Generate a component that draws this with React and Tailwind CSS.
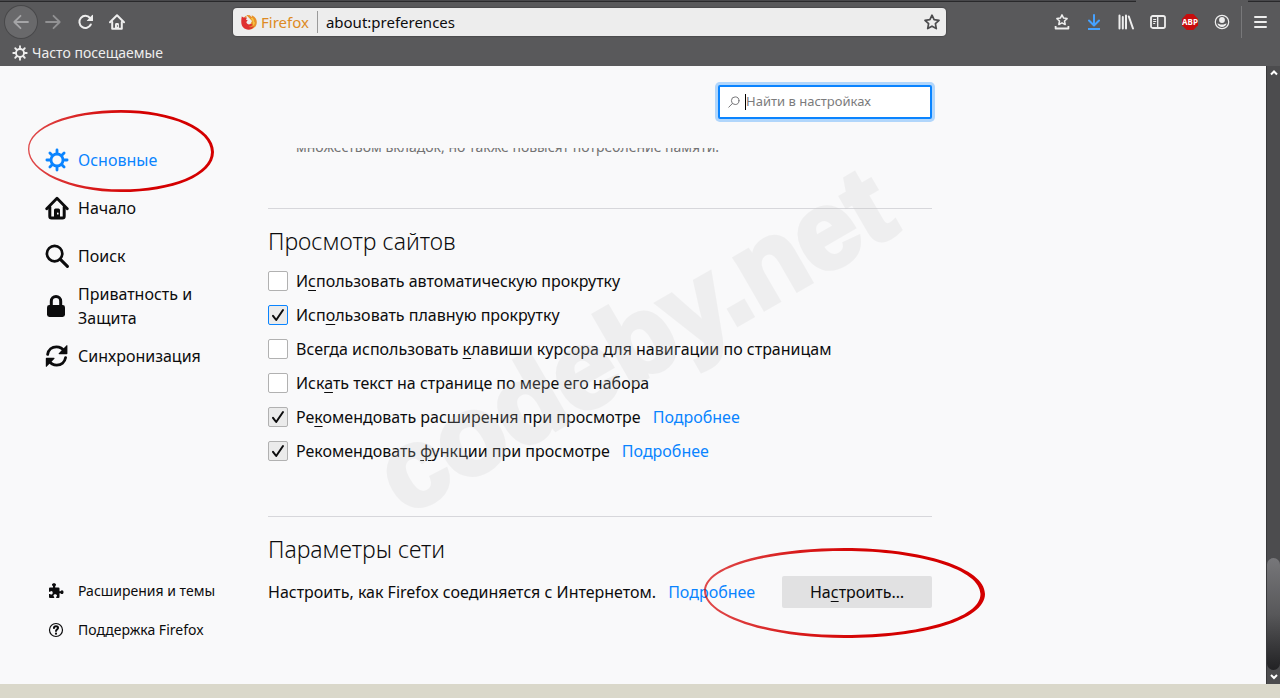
import React, { useState } from "react";

const NAV_ITEMS = [
  { id: "general", label: "Основные", icon: GearIcon },
  { id: "home", label: "Начало", icon: HomeIcon },
  { id: "search", label: "Поиск", icon: SearchIcon },
  { id: "privacy", label: "Приватность и Защита", icon: LockIcon },
  { id: "sync", label: "Синхронизация", icon: SyncIcon },
];

const BROWSING_OPTIONS = [
  { id: "autoscroll", before: "И", key: "с", after: "пользовать автоматическую прокрутку" },
  { id: "smooth", before: "Исп", key: "о", after: "льзовать плавную прокрутку", checked: true, hot: true },
  { id: "caret", before: "Всегда использовать ", key: "к", after: "лавиши курсора для навигации по страницам" },
  { id: "typeahead", before: "Иск", key: "а", after: "ть текст на странице по мере его набора" },
  { id: "extensions", before: "Ре", key: "к", after: "омендовать расширения при просмотре", checked: true, more: true },
  { id: "features", before: "Рекомендовать ", key: "ф", after: "ункции при просмотре", checked: true, more: true },
];

function GearIcon({ className }) {
  return (
    <svg viewBox="0 0 24 24" className={className} fill="none" stroke="currentColor" strokeLinecap="round">
      <circle cx="12" cy="12" r="6" strokeWidth="2.8" />
      <path
        strokeWidth="2.8"
        d="M12 1.9v3M12 19.1v3M1.9 12h3M19.1 12h3M4.9 4.9l2 2M17.1 17.1l2 2M4.9 19.1l2-2M17.1 6.9l2-2"
      />
    </svg>
  );
}

function HomeIcon({ className }) {
  return (
    <svg viewBox="0 0 24 24" className={className} fill="none" stroke="currentColor" strokeLinecap="round" strokeLinejoin="round">
      <path strokeWidth="2.8" d="M1.7 12.8 12 2.200l10.3 10.600" />
      <path strokeWidth="3" d="M4.8 11v9.2q0 1.8 1.8 1.8h10.8q1.8 0 1.8-1.8V11" />
      <path fill="currentColor" stroke="none" d="M9 22v-8a1.5 1.5 0 0 1 1.5-1.5h3A1.5 1.5 0 0 1 15 14v8z" />
      <rect x="12" y="16.5" width="1.6" height="2" rx=".6" fill="#f9f9fa" stroke="none" />
    </svg>
  );
}

function SearchIcon({ className }) {
  return (
    <svg viewBox="0 0 24 24" className={className} fill="none" stroke="currentColor" strokeLinecap="round">
      <circle cx="9.6" cy="9.6" r="7.7" strokeWidth="2.700" />
      <path strokeWidth="3" d="m15.4 15.4 7 7" />
    </svg>
  );
}

function LockIcon({ className }) {
  return (
    <svg viewBox="0 0 24 24" className={className} fill="none">
      <path stroke="currentColor" strokeWidth="3" d="M6.3 12V7.2a4.7 4.7 0 0 1 9.4 0V12" />
      <rect x="2" y="11" width="18" height="12" rx="2.4" fill="currentColor" />
    </svg>
  );
}

function SyncIcon({ className }) {
  return (
    <svg viewBox="0 0 24 24" className={className} fill="none" stroke="currentColor" strokeWidth="2.8" strokeLinecap="round">
      <path d="M2.6 10.4C3.4 5.8 7 2.8 11.4 2.8c3.400 0 6.200 1.600 7.800 4.400" />
      <path d="M20.600 13.600C19.800 18.200 16.200 21.200 11.800 21.200c-3.400 0-6.200-1.600-7.800-4.400" />
      <path fill="currentColor" stroke="none" d="M21.400 1.400q1-.8 1 .6v7.400q0 .8-.8.8h-7.200q-1.400 0-.6-1zM1.800 22.600q-1 .8-1-.6v-7.400q0-.8.8-.8h7.200q1.400 0 .6 1z" />
    </svg>
  );
}

function PuzzleIcon({ className }) {
  return (
    <svg viewBox="0 0 16 16" className={className} fill="currentColor">
      <path d="M5 3.300C4.300 2.800 4 2.300 4 1.800 4 .8 4.900.3 6 .3s2 .5 2 1.500c0 .5-.3 1-.8 1.500v1.200h3.300q1 0 1 1v2.700h1c.5-.7 1-.9 1.500-.9 1 0 1.500.9 1.500 1.900s-.5 1.900-1.500 1.900c-.5 0-1-.3-1.500-.9h-1V14q0 1-1 1H8.200v-1.100c.6-.4.800-.8.800-1.300 0-.8-.8-1.400-1.800-1.400s-1.800.6-1.800 1.400c0 .5.300.9.800 1.300V15H2q-1 0-1-1v-3.100h1.100c.4.500.8.700 1.200.7.900 0 1.400-.8 1.400-1.800S4.200 8 3.300 8c-.4 0-.8.300-1.200.8H1V5.500q0-1 1-1h3z" />
    </svg>
  );
}

function HelpIcon({ className }) {
  return (
    <svg viewBox="0 0 16 16" className={className} fill="none" stroke="currentColor" strokeLinecap="round">
      <circle cx="8" cy="8" r="6.500" strokeWidth="1.200" />
      <path strokeWidth="1.900" d="M5.900 6.100C6 4.800 6.800 4.200 8 4.200s2.100.7 2.100 1.800C10.100 7.400 8 7.400 8 9" />
      <circle cx="8" cy="11.700" r="1.100" fill="currentColor" stroke="none" />
    </svg>
  );
}

function FirefoxLogo({ className }) {
  return (
    <svg viewBox="0 0 16 16" className={className}>
      <path fill="#e8912a" d="M5.500 1.200C7 .9 8 1.600 8.700 1c.3 1 1.300 1 1.900 2 .4-.5.300-1.200.1-1.800C13.800 2.500 15.800 5 15.800 8.200c0 4-3 7.300-7.500 7.400l-3-4L9 10.800 11 7z" />
      <path fill="#df3030" d="M.9 2.200c.4.800 1 1.100 1.800 1.200C3.800 3 5 3.200 5.800 4.100L5 5.700l1.700.5-1.400 1.900c.4 1.800 2 2.700 3.800 2.200 1.200-.4 2-.3 2.400.4-.8 1.300-2.200 2-3.800 2 1.800 1 4 .6 5.400-.6-1.200 2.300-3.100 3.600-5.500 3.600C3.400 15.700.3 12.500.3 8.300c0-2.300 0-4.200.6-6.100z" />
      <path fill="#f6c544" d="M11.200 3.600c1.500 1.400 2 3 1.700 4.800.5-.2.700-.5.900-.9.200 2-.3 3.400-1.700 4.500.3-3-.3-5.600-2.300-7.500z" />
      <path fill="#e57a25" d="m3.200 3.300 2-1.500.4 2.300z" />
    </svg>
  );
}

function ToolbarButton({ label, className = "", children }) {
  return (
    <button type="button" aria-label={label} className={`flex h-8 w-8 shrink-0 items-center justify-center rounded-full ${className}`}>
      {children}
    </button>
  );
}

// Brush-like oval: faded hairline on the left, thick on the right
function Oval({ className }) {
  return (
    <svg viewBox="0 0 280 90" preserveAspectRatio="none" aria-hidden="true" className={`pointer-events-none absolute max-w-none ${className}`}>
      <defs>
        <linearGradient id="oval-ink">
          <stop offset="0" stopColor="#d40000" stopOpacity=".7" />
          <stop offset=".35" stopColor="#d40000" stopOpacity=".9" />
          <stop offset=".6" stopColor="#d40000" />
        </linearGradient>
      </defs>
      <path
        fill="url(#oval-ink)"
        fillRule="evenodd"
        d="M0 43C0 18 62 0 140 0s140 20 140 46-62 44-140 44S0 68 0 43zM2 43C2 67 64 87 140 87s135.500-17 135.500-41S216 3 140 3 2 19 2 43z"
      />
    </svg>
  );
}

function BrowserChrome() {
  const [url, setUrl] = useState("about:preferences");

  return (
    <header className="bg-[#59595b] text-[#eeeeee]">
      <div className="flex h-0.5">
        <div className="flex-1 border-b border-[#29292b] bg-[#48484b]"></div>
        <div className="w-28"></div>
        <div className="w-8 border-b border-[#29292b] bg-[#48484b]"></div>
      </div>
      <div className="flex h-10 items-center pl-[5px]">
        <ToolbarButton label="Назад" className="bg-[#69696b] text-[#a5a5a7] ring-1 ring-[#48484a]">
          <svg viewBox="0 0 16 16" className="h-4 w-4" fill="none" stroke="currentColor" strokeWidth="1.800" strokeLinecap="round" strokeLinejoin="round">
            <path d="M15 8H1.500M7.500 1.800 1.300 8l6.200 6.200" />
          </svg>
        </ToolbarButton>
        <ToolbarButton label="Вперёд" className="text-[#919193]">
          <svg viewBox="0 0 16 16" className="h-4 w-4" fill="none" stroke="currentColor" strokeWidth="1.800" strokeLinecap="round" strokeLinejoin="round">
            <path d="M1 8h13.500M8.500 1.800 14.700 8l-6.200 6.200" />
          </svg>
        </ToolbarButton>
        <ToolbarButton label="Обновить">
          <svg viewBox="0 0 16 16" className="h-4 w-4" fill="none" stroke="currentColor" strokeWidth="2" strokeLinecap="round">
            <path d="M13.800 10.500A6 6 0 1 1 13 4" />
            <path fill="currentColor" stroke="none" d="M16 1.500v5q0 .5-.5.5h-5.200q-.8 0-.3-.6L15.200 1q.8-.6.800.5z" />
          </svg>
        </ToolbarButton>
        <ToolbarButton label="Домашняя страница">
          <svg viewBox="0 0 16 16" className="h-4 w-4" fill="none" stroke="currentColor" strokeWidth="2" strokeLinecap="round" strokeLinejoin="round">
            <path d="M1 8.200 8 1.200l7 7" />
            <path d="M3.200 8v6.800h9.600V8" />
            <path fill="currentColor" stroke="none" d="M6 15v-4.500Q6 9 7 9h2q1 0 1 1.500V15z" />
            <circle cx="8.500" cy="12" r=".7" fill="#59595b" stroke="none" />
          </svg>
        </ToolbarButton>

        <div className="mx-[100px] flex h-7 min-w-0 flex-1 items-center rounded-sm bg-[#ededed] text-[15px] shadow-[0_0_1px_1px_#4b4b4d]">
          <button type="button" className="flex h-full items-center gap-1 pl-2 text-[#dd8a23]">
            <FirefoxLogo className="h-4 w-4" />
            Firefox
          </button>
          <div className="ml-2 h-[22px] w-px bg-[#9a9a9a]"></div>
          <input
            aria-label="Адрес"
            value={url}
            onChange={(e) => setUrl(e.target.value)}
            className="min-w-0 flex-1 bg-transparent px-2 text-[#0c0c0d] outline-none"
          />
          <button type="button" aria-label="Добавить в закладки" className="px-1.5 text-[#4c4c4e]">
            <svg viewBox="0 0 16 16" className="h-4 w-4" fill="none" stroke="currentColor" strokeWidth="1.700" strokeLinejoin="round">
              <path d="m8 1.200 2.100 4.500 4.900.6-3.600 3.400.9 4.900L8 12.200l-4.300 2.400.9-4.900L1 6.300l4.900-.6z" />
            </svg>
          </button>
        </div>

        <ToolbarButton label="Закладки">
          <svg viewBox="0 0 16 16" className="h-4 w-4" fill="none" stroke="currentColor" strokeWidth="1.500" strokeLinejoin="round">
            <path d="m8 .9 1.600 3.200 3.500.5-2.600 2.400.7 3.500L8 8.800l-3.200 1.700.7-3.500-2.600-2.400 3.500-.5z" />
            <path strokeWidth="1.800" d="M1.600 12v2.500h12.800V12" />
          </svg>
        </ToolbarButton>
        <ToolbarButton label="Загрузки" className="text-[#45a1ff]">
          <svg viewBox="0 0 16 16" className="h-4 w-4" fill="none" stroke="currentColor" strokeWidth="2" strokeLinecap="round" strokeLinejoin="round">
            <path d="M8 1v10M3 6.500l5 5 5-5" />
            <path strokeLinecap="butt" d="M2 15h12" />
          </svg>
        </ToolbarButton>
        <ToolbarButton label="Библиотека">
          <svg viewBox="0 0 16 16" className="h-4 w-4" fill="none" stroke="currentColor" strokeWidth="2" strokeLinecap="round">
            <path d="M1.500 1.500v13M4.800 3v11.500M8 1.500v13M10.800 2.500l4.200 12" />
          </svg>
        </ToolbarButton>
        <ToolbarButton label="Боковая панель">
          <svg viewBox="0 0 16 16" className="h-4 w-4" fill="none" stroke="currentColor">
            <rect x="1" y="2" width="14" height="12" rx="1.800" strokeWidth="1.800" />
            <path strokeWidth="1.400" d="M7.700 2v12" />
            <path d="M3.200 5.500h3M3.200 7.500h3M3.200 9.500h2" />
          </svg>
        </ToolbarButton>
        <ToolbarButton label="Adblock Plus">
          <svg viewBox="0 0 16 16" className="h-4 w-4">
            <path fill="#c70d0d" d="M4.700 0h6.600L16 4.700v6.600L11.300 16H4.700L0 11.300V4.700z" />
            <text x="8" y="10.800" textAnchor="middle" fill="#fff" className="font-['Noto_Sans'] text-[8px] font-bold">
              ABP
            </text>
          </svg>
        </ToolbarButton>
        <ToolbarButton label="Аккаунт">
          <svg viewBox="0 0 16 16" className="h-4 w-4" fill="none" stroke="currentColor">
            <circle cx="8" cy="8" r="6.700" strokeWidth="1.200" />
            <circle cx="8" cy="6" r="2.900" fill="currentColor" stroke="none" />
            <path fill="currentColor" stroke="none" d="M3.400 9.500c1.200-.3 1.700 1 4.600 1s3.400-1.300 4.600-1A5 5 0 0 1 8 13a5 5 0 0 1-4.600-3.500z" />
          </svg>
        </ToolbarButton>
        <div className="ml-[3px] h-8 w-px bg-[#78787a]"></div>
        <ToolbarButton label="Меню" className="ml-0.5 mr-1">
          <svg viewBox="0 0 16 16" className="h-4 w-4" stroke="currentColor" strokeWidth="2" strokeLinecap="round">
            <path d="M3 3h11M3 8h11M3 13h11" />
          </svg>
        </ToolbarButton>
      </div>
      <div className="flex h-6 items-start pt-px pl-3">
        <button type="button" className="flex items-center gap-1 text-sm">
          <GearIcon className="h-4 w-4" />
          Часто посещаемые
        </button>
      </div>
    </header>
  );
}

function MoreLink() {
  return (
    <a href="#more" className="text-[#0a84ff]">
      Подробнее
    </a>
  );
}

function AccessKey({ children }) {
  return <span className="underline decoration-1 underline-offset-3">{children}</span>;
}

function Option({ option }) {
  const [checked, setChecked] = useState(Boolean(option.checked));

  return (
    <li className="flex h-[34px] items-center gap-3">
      <label className="flex items-center gap-2">
        <span className="relative flex">
          <input
            type="checkbox"
            checked={checked}
            onChange={() => setChecked(!checked)}
            className={`h-5 w-5 appearance-none rounded-xs border bg-white checked:bg-[#ebebeb] ${option.hot ? "border-[#0a84ff]" : "border-[#b1b1b1]"}`}
          />
          {checked && (
            <svg viewBox="0 0 20 20" className="pointer-events-none absolute inset-0 h-5 w-5" fill="none" stroke="#0c0c0d" strokeWidth="2" strokeLinecap="round" strokeLinejoin="round">
              <path d="M5 10.800 8.200 15 15 5" />
            </svg>
          )}
        </span>
        <span>
          {option.before}
          <AccessKey>{option.key}</AccessKey>
          {option.after}
        </span>
      </label>
      {option.more && <MoreLink />}
    </li>
  );
}

function Sidebar() {
  return (
    <aside className="flex w-[268px] shrink-0 flex-col justify-between pt-[70px] pb-[35px] pl-[45px]">
      <nav>
        {NAV_ITEMS.map((item) => {
          const Icon = item.icon;
          const active = item.id === "general";
          return (
            <a
              key={item.id}
              href={`#${item.id}`}
              className={`relative flex min-h-12 w-44 items-center gap-[9px] py-0.5 leading-6 ${active ? "text-[#0a84ff]" : ""}`}
            >
              <Icon className="h-6 w-6 shrink-0" />
              {item.label}
              {active && <Oval className="-top-[26px] -left-[17px] h-[82px] w-[186px]" />}
            </a>
          );
        })}
      </nav>
      <div className="text-sm">
        <a href="#addons" className="flex h-[39px] items-center gap-3.5 pl-[3px]">
          <PuzzleIcon className="h-4 w-4" />
          Расширения и темы
        </a>
        <a href="#support" className="flex h-[39px] items-center gap-3.5 pl-[3px]">
          <HelpIcon className="h-4 w-4" />
          Поддержка Firefox
        </a>
      </div>
    </aside>
  );
}

function Preferences() {
  return (
    <main className="relative w-full max-w-[664px] pt-[19px]">
      <div className="flex justify-end">
        <label className="relative flex h-[34px] w-[214px] items-center gap-1.5 rounded-xs border-2 border-[#0a84ff] bg-white pl-2 text-[13px] ring-3 ring-[#0a84ff]/30">
          <svg viewBox="0 0 12 12" className="h-3 w-3 shrink-0" fill="none" stroke="#77777a" strokeLinecap="round">
            <circle cx="7.200" cy="4.700" r="3.800" />
            <path d="M4.300 7.600.8 11.200" />
          </svg>
          <span className="absolute left-[25px] h-4 w-px bg-black"></span>
          <input
            type="text"
            aria-label="Найти в настройках"
            placeholder="Найти в настройках"
            className="w-full min-w-0 bg-transparent outline-none placeholder:text-[#7b7b7c]"
          />
        </label>
      </div>

      <div className="mt-[29px] flex h-2 items-end overflow-hidden pl-7 text-sm leading-[18px] text-[#737373]">
        множеством вкладок, но также повысят потребление памяти.
      </div>

      <section className="mt-[52px] border-t border-[#d7d7db] pt-4">
        <h2 className="text-[23px] leading-8 font-light">Просмотр сайтов</h2>
        <ul className="mt-[7px]">
          {BROWSING_OPTIONS.map((option) => (
            <Option key={option.id} option={option} />
          ))}
        </ul>
      </section>

      <section className="mt-12 border-t border-[#d7d7db] pt-4">
        <h2 className="text-[23px] leading-8 font-light">Параметры сети</h2>
        <div className="mt-[11px] flex items-center justify-between">
          <p className="flex gap-3">
            <span>Настроить, как Firefox соединяется с Интернетом.</span>
            <MoreLink />
          </p>
          <div className="relative">
            <button type="button" className="h-8 w-[150px] rounded-xs bg-[#e1e1e2]">
              На<AccessKey>с</AccessKey>троить…
            </button>
            <Oval className="-top-7 -left-[78px] h-[90px] w-[281px]" />
          </div>
        </div>
      </section>

      <div className="pointer-events-none absolute top-[219px] left-[80px] -rotate-30 font-['Liberation_Sans',sans-serif] text-[110px] leading-none font-bold whitespace-nowrap text-[#c7c7c7] opacity-20 select-none [-webkit-text-stroke:5px_#c7c7c7]">
        codeby.net
      </div>
    </main>
  );
}

function ScrollBar() {
  return (
    <div aria-hidden="true" className="flex w-3.5 shrink-0 flex-col items-center justify-between border-l border-[#38383a] bg-[#4c4c4e] text-white">
      <svg viewBox="0 0 14 14" className="h-3.5 w-3.5" fill="none" stroke="currentColor" strokeWidth="2">
        <path d="m4 8.500 3-3 3 3" />
      </svg>
      <div className="flex w-full flex-1 flex-col justify-end">
        <div className="h-28 rounded-full bg-linear-to-b from-[#77777a] via-[#58585a] to-[#222224]"></div>
      </div>
      <svg viewBox="0 0 14 14" className="h-3.5 w-3.5" fill="none" stroke="currentColor" strokeWidth="2">
        <path d="m4 5 3 3 3-3" />
      </svg>
    </div>
  );
}

const App = () => {
  return (
    <div className="flex min-h-screen flex-col bg-[#f9f9fa] font-['Noto_Sans',sans-serif] text-base text-[#0c0c0d]">
      <BrowserChrome />
      <div className="flex flex-1">
        <div className="flex min-w-0 flex-1">
          <Sidebar />
          <Preferences />
        </div>
        <ScrollBar />
      </div>
      <footer className="h-3.5 bg-[#dad8ca]"></footer>
    </div>
  );
};

export default App;
